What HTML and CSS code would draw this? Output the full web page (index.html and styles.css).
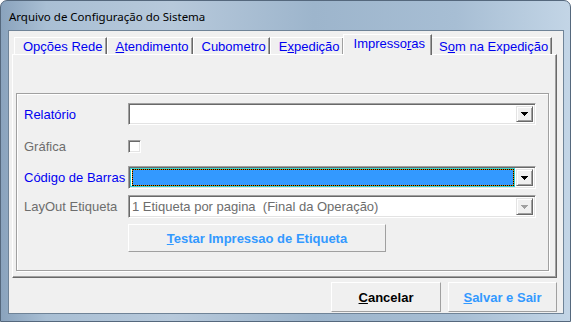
FILE: index.html
```html
<!DOCTYPE html>
<html>
<head>
	<meta charset="UTF-8" />
	<title>Arquivo de Configuração do Sistema</title>
	<link rel="stylesheet" href="styles.css">
</head>
<body>
	<div class="window">
		<div class="titlebar">Arquivo de Configuração do Sistema</div>
		<div class="client">
			<div class="tabs">
				<div class="tab">Opções Rede</div>
				<div class="tab"><u>A</u>tendimento</div>
				<div class="tab">Cubometro</div>
				<div class="tab">E<u>x</u>pedição</div>
				<div class="tab active">Impresso<u>r</u>as</div>
				<div class="tab">S<u>o</u>m na Expedição</div>
			</div>
			<div class="panel">
				<div class="group">
					<div class="row r1">
						<span class="lbl blue">Relatório</span>
						<div class="combo">
							<div class="value"></div>
							<span class="drop"><svg width="7" height="4" viewBox="0 0 7 4"><path d="M0 0h7L3.5 4z" /></svg></span>
						</div>
					</div>
					<div class="row r2">
						<span class="lbl gray">Gráfica</span>
						<span class="check"></span>
					</div>
					<div class="row r3">
						<span class="lbl blue">Código de Barras</span>
						<div class="combo">
							<div class="value focus"></div>
							<span class="drop"><svg width="7" height="4" viewBox="0 0 7 4"><path d="M0 0h7L3.5 4z" /></svg></span>
						</div>
					</div>
					<div class="row r4">
						<span class="lbl gray">LayOut Etiqueta</span>
						<div class="combo disabled">
							<div class="value">1 Etiqueta por pagina&nbsp; (Final da Operação)</div>
							<span class="drop"><svg width="7" height="4" viewBox="0 0 7 4"><path d="M0 0h7L3.5 4z" /></svg></span>
						</div>
					</div>
					<div class="row r5">
						<span class="lbl"></span>
						<button class="btn test"><u>T</u>estar Impressao de Etiqueta</button>
					</div>
				</div>
			</div>
			<div class="footer">
				<button class="btn cancel"><u>C</u>ancelar</button>
				<button class="btn save"><u>S</u>alvar e Sair</button>
			</div>
		</div>
	</div>
</body>
</html>
```

FILE: styles.css
```css
body {
	margin: 0;
	background: #fff;
}
.window {
	width: 571px;
	height: 322px;
	box-sizing: border-box;
	border: 1px solid #55687d;
	border-radius: 7px 7px 0 0;
	padding: 0 6px 7px 7px;
	display: flex;
	flex-direction: column;
	background: linear-gradient(to right, #8aa3bd 0, #a9bfd4 8%, #b7c9db 30%, #9db5cc 55%, #a7bed4 80%, #c3d5e6 100%);
	font-family: "Liberation Sans", Arial, sans-serif;
	font-size: 13px;
}
.titlebar {
	height: 29px;
	line-height: 31px;
	padding-left: 1px;
	font-family: "Noto Sans", "Liberation Sans", sans-serif;
	font-size: 11.5px;
	color: #000;
	white-space: nowrap;
}
.client {
	flex: 1;
	box-sizing: border-box;
	border: 1px solid #6f8397;
	background: #f0f0f0;
	padding: 3px 6px 1px 3px;
	display: flex;
	flex-direction: column;
}

/* tabs */
.tabs {
	display: flex;
	align-items: flex-end;
	height: 20px;
	padding-left: 2px;
}
.tab {
	height: 17px;
	line-height: 17px;
	box-sizing: border-box;
	padding: 0 3px 0 8px;
	border-left: 1px solid #fff;
	border-top: 1px solid #fff;
	border-right: 1px solid #696969;
	box-shadow: inset -1px 0 #a0a0a0;
	color: #0000f0;
	white-space: nowrap;
}
.tab.active {
	position: relative;
	z-index: 1;
	height: 21px;
	margin: 0 -2px -1px -1px;
	padding: 0 6px 1px 10px;
	line-height: 18px;
	background: #f0f0f0;
}
u { text-decoration: underline; text-underline-offset: 1px; }

.panel {
	height: 224px;
	box-sizing: border-box;
	border-top: 1px solid #fff;
	border-left: 1px solid #fff;
	border-right: 1px solid #696969;
	border-bottom: 1px solid #696969;
	box-shadow: inset -1px -1px #a0a0a0;
	padding: 38px 7px 6px 3px;
	display: flex;
}
.group {
	flex: 1;
	box-sizing: border-box;
	border: 1px solid #a0a0a0;
	box-shadow: inset 1px 1px #fff, 1px 1px #fff;
	padding: 9px 12px 0 7px;
}
.row {
	display: flex;
	align-items: center;
}
.r2 { margin-top: 15px; height: 13px; }
.r3 { margin-top: 13px; }
.r4 { margin-top: 6px; }
.r5 { margin-top: 6px; }
.lbl {
	width: 104px;
	flex: none;
	white-space: nowrap;
}
.blue { color: #0000f0; }
.gray { color: #6d6d6d; }

/* combo boxes */
.combo {
	flex: 1;
	height: 22px;
	box-sizing: border-box;
	border-top: 1px solid #a0a0a0;
	border-left: 1px solid #a0a0a0;
	border-right: 1px solid #fff;
	border-bottom: 1px solid #fff;
	box-shadow: inset 1px 1px #696969, inset -1px -1px #e3e3e3;
	background: #fff;
	padding: 2px;
	display: flex;
}
.r3 .combo, .r4 .combo { height: 23px; }
.value {
	flex: 1;
	color: #6d6d6d;
	line-height: 17px;
	padding-left: 1px;
	white-space: nowrap;
	overflow: hidden;
}
.value.focus {
	margin: -1px 1px -1px -1px;
	border: 1px solid #37d4d4;
}
.value.focus::before {
	content: "";
	display: block;
	height: 100%;
	box-sizing: border-box;
	border: 1px dotted #000;
	background: linear-gradient(#3399ff, #3399ff) padding-box, #d88400;
}
.drop {
	width: 17px;
	flex: none;
	box-sizing: border-box;
	background: #f0f0f0;
	border-top: 1px solid #e3e3e3;
	border-left: 1px solid #e3e3e3;
	border-right: 1px solid #696969;
	border-bottom: 1px solid #696969;
	box-shadow: inset 1px 1px #fff, inset -1px -1px #a0a0a0;
	display: flex;
	align-items: center;
	justify-content: center;
}
.drop svg { fill: #000; shape-rendering: crispEdges; }
.disabled .drop svg { fill: #a0a0a0; }

.check {
	width: 13px;
	height: 13px;
	box-sizing: border-box;
	border-top: 1px solid #a0a0a0;
	border-left: 1px solid #a0a0a0;
	border-right: 1px solid #fff;
	border-bottom: 1px solid #fff;
	box-shadow: inset 1px 1px #696969, inset -1px -1px #e3e3e3;
	background: #fff;
}

/* buttons */
.btn {
	box-sizing: border-box;
	border-top: 1px solid #fff;
	border-left: 1px solid #fff;
	border-right: 1px solid #a0a0a0;
	border-bottom: 1px solid #a0a0a0;
	background: #f0f0f0;
	font-family: "Liberation Sans", Arial, sans-serif;
	font-size: 13px;
	font-weight: bold;
	padding: 0;
	white-space: nowrap;
}
.test {
	width: 258px;
	height: 28px;
	color: #3399ff;
}
.footer {
	display: flex;
	justify-content: flex-end;
	gap: 7px;
	margin-top: 4px;
}
.cancel, .save {
	width: 110px;
	height: 30px;
}
.cancel { color: #000; }
.save { color: #3399ff; width: 109px; }
```
